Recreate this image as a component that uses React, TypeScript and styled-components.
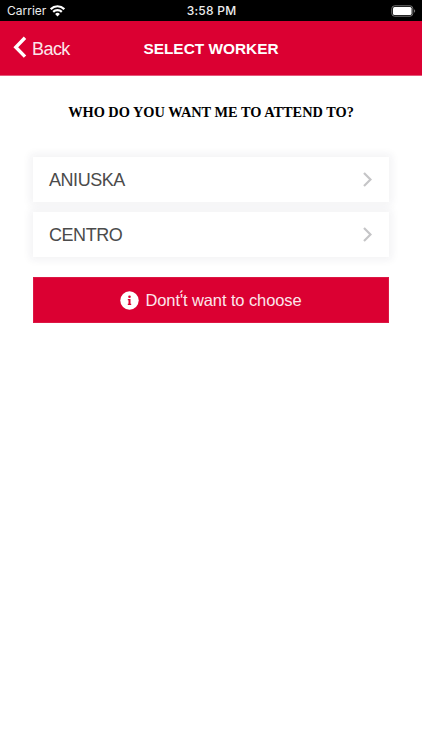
import React from "react";
import styled, { createGlobalStyle } from "styled-components";

const GlobalStyle = createGlobalStyle`
  * { box-sizing: border-box; }
  body { margin: 0; background: #fff; font-family: "Liberation Sans", Arial, sans-serif; }
  button { font: inherit; border: 0; padding: 0; background: none; color: inherit; }
  svg { display: block; flex: none; }
`;

const Screen = styled.div`
  min-height: 750px;
  background: #fff;
`;

const StatusBar = styled.div`
  display: grid;
  grid-template-columns: 1fr auto 1fr;
  align-items: center;
  height: 21px;
  padding: 0 6px 0 7px;
  background: #000;
  color: #ededed;
  font-family: Inter, sans-serif;
  font-size: 12px;
  line-height: 21px;
`;

const Carrier = styled.div`
  display: flex;
  align-items: center;
  gap: 4px;
`;

const Clock = styled.div`
  font-weight: 500;
  letter-spacing: 0.25px;
`;

const Battery = styled.div`
  justify-self: end;
`;

const Header = styled.header`
  display: grid;
  grid-template-columns: 1fr auto 1fr;
  align-items: center;
  height: 55px;
  padding: 0 13px;
  background: #db0032;
  border-bottom: 1px solid #e5587a;
  color: #fff;
`;

const BackButton = styled.button`
  display: flex;
  align-items: center;
  gap: 5px;
  height: 22px;
  margin-top: -2px;
  font-size: 18px;
  line-height: 20px;
  color: #fbe6eb;
`;

const BackLabel = styled.span`
  letter-spacing: -0.55px;
  padding-top: 3px;
`;

const Title = styled.h1`
  margin: 0;
  padding-top: 2px;
  font-size: 15.4px;
  line-height: 20px;
`;

const Content = styled.main`
  padding: 26px 33px 0;
`;

const Question = styled.h2`
  margin: 0 0 35px;
  text-align: center;
  font: bold 14.35px/20px "Liberation Serif", serif;
  color: #000;
`;

const WorkerList = styled.div`
  display: flex;
  flex-direction: column;
  gap: 10px;
`;

const WorkerRow = styled.button`
  display: flex;
  align-items: center;
  justify-content: space-between;
  height: 45px;
  padding: 0 17px 0 16px;
  background: #fff;
  box-shadow: 0 0 8px 3px rgba(40, 40, 70, 0.06);
  color: #4b4b4b;
  font-size: 18px;
`;

const WorkerName = styled.span`
  letter-spacing: -0.45px;
  padding-top: 2px;
`;

const SkipButton = styled.button`
  display: flex;
  align-items: center;
  justify-content: center;
  gap: 6px;
  width: 100%;
  height: 46px;
  margin-top: 20px;
  background: #db0032;
  border: 1px solid #dc1744;
  color: #fbe6eb;
  font-size: 16.5px;
`;

const SkipLabel = styled.span`
  letter-spacing: -0.1px;
  padding-top: 1px;
`;

const workers = ["ANIUSKA", "CENTRO"];

const WifiIcon = () => (
  <svg width="15" height="12" viewBox="0 0 15 12" fill="none" stroke="#fff" strokeWidth="2.2">
    <path d="M.7 4.1C4.5.3 10.5.3 14.3 4.1M3.2 6.900c2.400-2.400 6.200-2.400 8.600 0" />
    <path d="M7.500 11.400 5.100 9a3.400 3.400 0 0 1 4.800 0z" fill="#fff" stroke="none" />
  </svg>
);

const BatteryIcon = () => (
  <svg width="25" height="12" viewBox="0 0 25 12">
    <rect x=".8" y=".8" width="21" height="10.400" rx="2.800" fill="none" stroke="#777" />
    <rect x="2" y="2" width="18.600" height="8" rx="1.500" fill="#fff" />
    <path d="M23 4.200c1.600.6 1.600 3 0 3.600z" fill="#777" />
  </svg>
);

export default function App() {
  return (
    <Screen>
      <GlobalStyle />
      <StatusBar>
        <Carrier>
          <span>Carrier</span>
          <WifiIcon />
        </Carrier>
        <Clock>3:58 PM</Clock>
        <Battery>
          <BatteryIcon />
        </Battery>
      </StatusBar>
      <Header>
        <BackButton>
          <svg width="14" height="22" viewBox="0 0 14 22" fill="none" stroke="#fff" strokeWidth="3.4">
            <path d="M12 1.800 2.800 11.200l9.200 9.400" />
          </svg>
          <BackLabel>Back</BackLabel>
        </BackButton>
        <Title>SELECT WORKER</Title>
      </Header>
      <Content>
        <Question>WHO DO YOU WANT ME TO ATTEND TO?</Question>
        <WorkerList>
          {workers.map((name) => (
            <WorkerRow key={name}>
              <WorkerName>{name}</WorkerName>
              <svg width="9" height="15" viewBox="0 0 9 15" fill="none" stroke="#c5c5c7" strokeWidth="2.2">
                <path d="M1 1l6.500 6.500L1 14" />
              </svg>
            </WorkerRow>
          ))}
        </WorkerList>
        <SkipButton>
          <svg width="19" height="19" viewBox="0 0 19 19">
            <circle cx="9.500" cy="9.500" r="9.200" fill="#fff" />
            <circle cx="9.500" cy="5.700" r="1.300" fill="#db0032" />
            <path d="M7.800 8h2.700v4.800h.7v1.200H7.800v-1.200h.7V9.200h-.7z" fill="#db0032" />
          </svg>
          <SkipLabel>{"Dont'\u0301t want to choose"}</SkipLabel>
        </SkipButton>
      </Content>
    </Screen>
  );
}
